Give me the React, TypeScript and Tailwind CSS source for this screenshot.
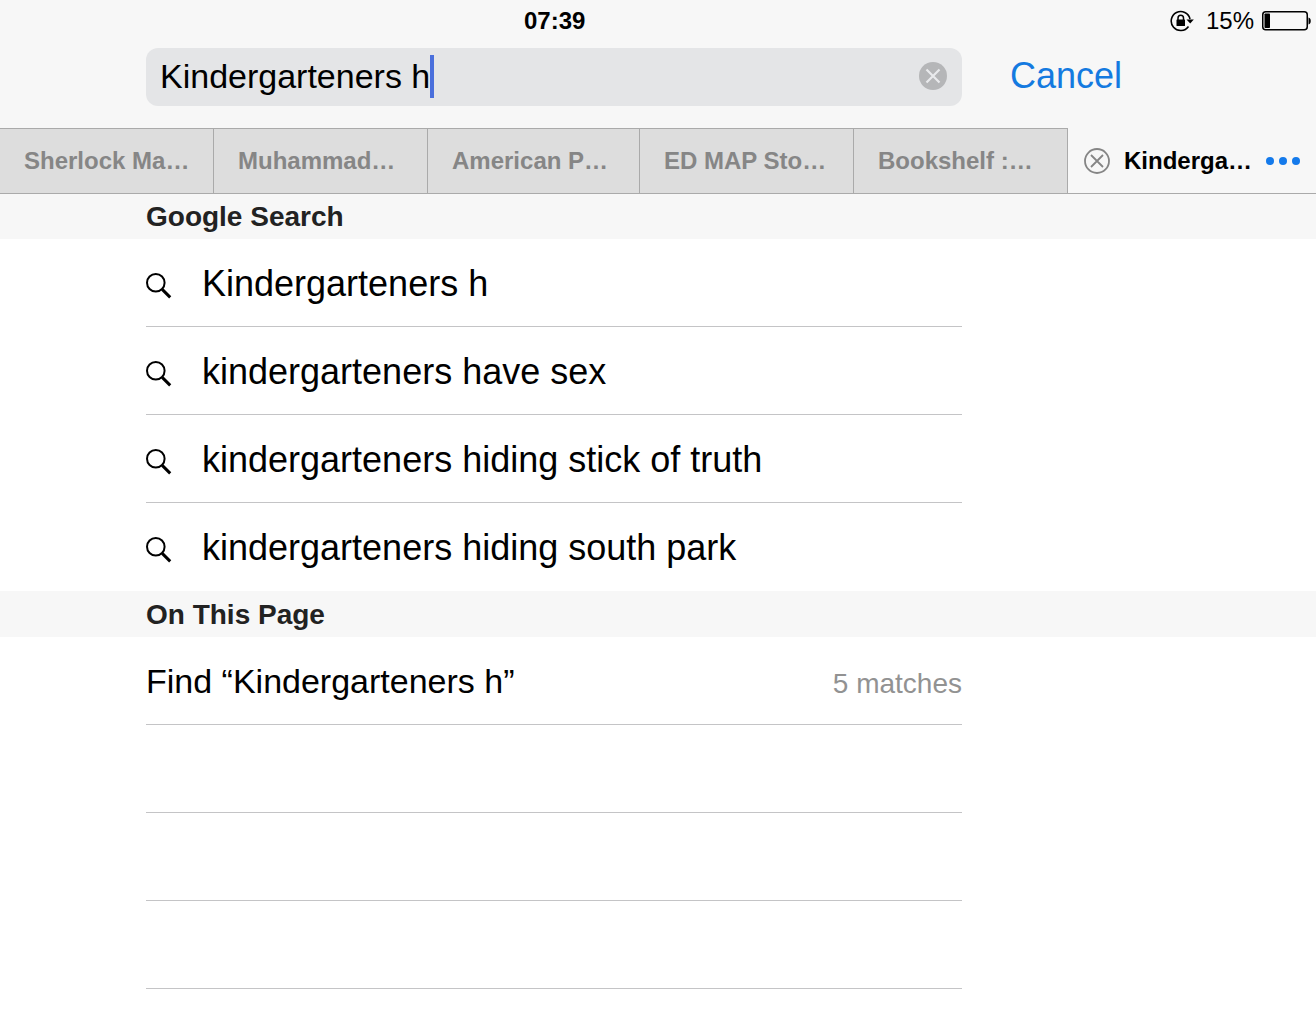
import { useState } from 'react';

const TABS = [
  'Sherlock Ma…',
  'Muhammad…',
  'American P…',
  'ED MAP Sto…',
  'Bookshelf :…',
];

const SUGGESTIONS = [
  'Kindergarteners h',
  'kindergarteners have sex',
  'kindergarteners hiding stick of truth',
  'kindergarteners hiding south park',
];

function RotationLockIcon() {
  return (
    <svg width="24" height="22" viewBox="0 0 24 22" fill="none" aria-hidden="true">
      <path d="M20 9A9.5 9.5 0 1 0 18.500 16.500" stroke="#000" strokeWidth="1.6" />
      <path d="M16.500 9.500h7.300l-3.600 4z" fill="#000" />
      <rect x="6.500" y="9.500" width="8.500" height="6.500" rx="0.5" fill="#000" />
      <path d="M8 10V8a2.750 2.750 0 0 1 5.500 0v2" stroke="#000" strokeWidth="1.5" />
    </svg>
  );
}

function BatteryIcon() {
  return (
    <svg width="50" height="20" viewBox="0 0 50 20" fill="none" aria-hidden="true">
      <rect x="0.750" y="0.750" width="44.500" height="18" rx="3" stroke="#000" strokeWidth="1.5" />
      <rect x="2.500" y="2.500" width="5.500" height="14.500" rx="0.800" fill="#000" />
      <path d="M46.500 6.500c3 .8 3 6.200 0 7z" fill="#000" />
    </svg>
  );
}

function SearchIcon() {
  return (
    <svg className="shrink-0" width="26" height="26" viewBox="0 0 26 26" fill="none" stroke="#000" aria-hidden="true">
      <circle cx="9.800" cy="9.800" r="8.800" strokeWidth="2" />
      <path d="M16.200 16.400l8 8" strokeWidth="3" />
    </svg>
  );
}

function SectionHeader({ title }: { title: string }) {
  return (
    <h2 className="h-[46px] bg-[#f7f7f7] pl-[146px] text-[28px] leading-[48px] font-bold text-[#222]">
      {title}
    </h2>
  );
}

export default function App() {
  const [query, setQuery] = useState('Kindergarteners h');

  return (
    <div className="min-h-screen overflow-x-hidden bg-white font-['Liberation_Sans',Arial,sans-serif] text-black">
      <header className="bg-[#f7f7f7]">
        {/* Status bar */}
        <div className="flex h-12 items-start justify-between pt-2 pr-1 text-[24px] leading-[26px]">
          <time className="pl-[524px] font-bold">07:39</time>
          <div className="flex items-center gap-3">
            <RotationLockIcon />
            <div className="flex items-center gap-2">
              <span>15%</span>
              <BatteryIcon />
            </div>
          </div>
        </div>

        {/* Search field */}
        <div className="flex items-center gap-12 pb-[22px] pl-[146px]">
          <div className="flex h-[58px] max-w-[816px] flex-1 items-center rounded-xl bg-[#e4e5e7] pr-[15px] pb-[2px] pl-[14px]">
            <input
              type="text"
              aria-label="Search"
              value={query}
              onChange={(e) => setQuery(e.target.value)}
              className="field-sizing-content bg-transparent text-[34px] leading-10 caret-transparent outline-none"
            />
            <span className="h-[43px] w-1 bg-[#4a6fdc]" />
            <button type="button" aria-label="Clear text" onClick={() => setQuery('')} className="ml-auto">
              <svg width="28" height="28" viewBox="0 0 28 28" fill="none" aria-hidden="true">
                <circle cx="14" cy="14" r="14" fill="#b5b6b8" />
                <path d="M7.500 7.500l13 13M20.500 7.500l-13 13" stroke="#e9eaec" strokeWidth="2.200" />
              </svg>
            </button>
          </div>
          <button type="button" className="pb-[2px] text-[36px] leading-10 text-[#147ae0]">Cancel</button>
        </div>

        {/* Tabs */}
        <nav className="relative -mb-px grid h-[66px] grid-cols-[214fr_214fr_212fr_214fr_214fr_248fr] border-b border-[#aaa] text-[24px] leading-8 font-bold">
          {TABS.map((tab) => (
            <button
              key={tab}
              type="button"
              className="truncate border-t border-r border-[#aaa] bg-[#ddd] pl-6 text-left text-[#868686]"
            >
              {tab}
            </button>
          ))}
          <div className="flex items-center justify-between px-4">
            <button type="button" aria-label="Close tab">
              <svg width="26" height="26" viewBox="0 0 26 26" fill="none" stroke="#858585" aria-hidden="true">
                <circle cx="13" cy="13" r="12" strokeWidth="1.800" />
                <path d="M7 7l12 12M19 7L7 19" strokeWidth="1.800" />
              </svg>
            </button>
            <button type="button">Kinderga…</button>
            <button type="button" aria-label="More tabs">
              <svg width="34" height="8" viewBox="0 0 34 8" fill="#147aeb" aria-hidden="true">
                <circle cx="4" cy="4" r="4" />
                <circle cx="17" cy="4" r="4" />
                <circle cx="30" cy="4" r="4" />
              </svg>
            </button>
          </div>
        </nav>
      </header>

      <main>
        <section>
          <SectionHeader title="Google Search" />
          <ul className="ml-[146px] max-w-[816px]">
            {SUGGESTIONS.map((suggestion) => (
              <li key={suggestion} className="h-[88px] border-b border-[#c4c4c6] last:border-transparent">
                <button type="button" className="flex h-full w-full items-center gap-[30px] pt-[6px] text-left text-[36px] leading-10">
                  <SearchIcon />
                  <span className="pb-1">{suggestion}</span>
                </button>
              </li>
            ))}
          </ul>
        </section>

        <section>
          <SectionHeader title="On This Page" />
          <ul className="ml-[146px] max-w-[816px]">
            <li className="h-[88px] border-b border-[#c4c4c6]">
              <button type="button" className="flex h-full w-full items-baseline justify-between pt-6 text-left text-[34px] leading-10">
                <span>Find “Kindergarteners h”</span>
                <span className="text-[28px] text-[#929292]">5 matches</span>
              </button>
            </li>
            <li className="h-[88px] border-b border-[#c4c4c6]" />
            <li className="h-[88px] border-b border-[#c4c4c6]" />
            <li className="h-[88px] border-b border-[#c4c4c6]" />
          </ul>
        </section>
      </main>
    </div>
  );
}
